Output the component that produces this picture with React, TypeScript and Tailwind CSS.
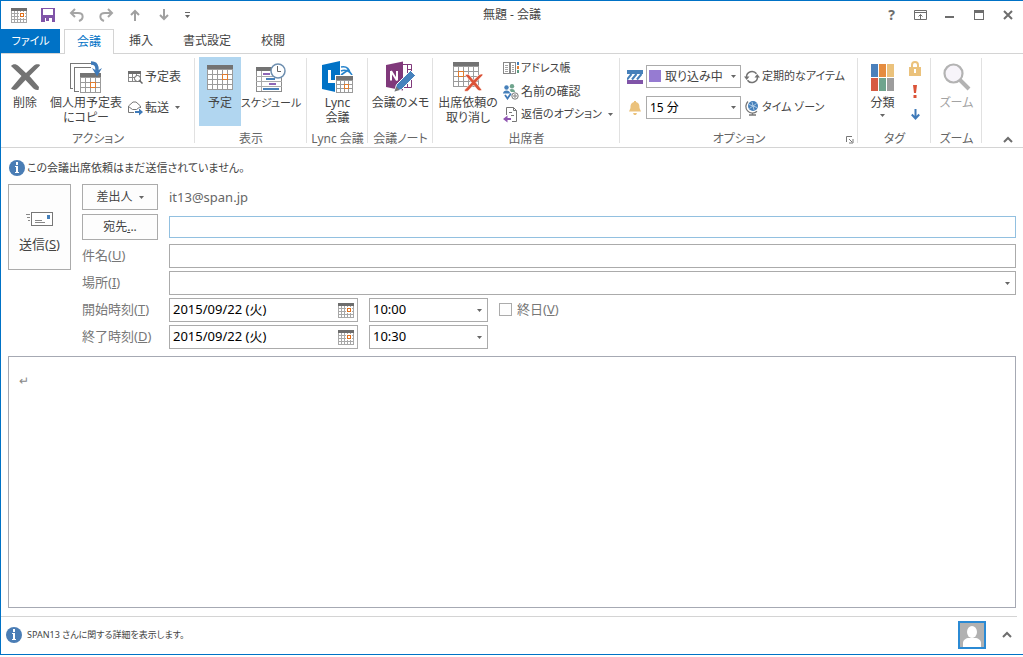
import type { ReactNode } from "react";

function CalendarIcon() {
    return (
        <svg width="16" height="15" viewBox="0 0 16 15" shapeRendering="crispEdges">
            <path d="M0 0h16v15H0z" fill="#fff" />
            <path d="M.5 0v15M3.500 3v12M6.500 3v12M9.500 3v12M12.500 3v12M15.500 0v15M0 5.500h16M0 8.500h16M0 11.500h16M0 14.500h16" stroke="#a8a8a8" />
            <path d="M0 0h16v3H0z" fill="#6d6d6d" />
            <path d="M8 4h6v6H8z" fill="#fff" />
            <path d="M9 5h4v4H9z" fill="#e0701c" />
            <path d="M10 6h2v2h-2z" fill="#fff" />
        </svg>
    );
}

// Large month grid used by the 32px ribbon icons
function MonthGrid({ x = 0, y = 0, cols = 5, rows = 4, cell = 5, mark = "3,1" }: { x?: number; y?: number; cols?: number; rows?: number; cell?: number; mark?: string }) {
    const w = cols * cell + 1;
    const h = rows * cell + 1;
    const [mc, mr] = mark.split(",").map(Number);
    const mx = x + mc * cell;
    const my = y + 4 + mr * cell;
    return (
        <g shapeRendering="crispEdges">
            <rect x={x} y={y} width={w} height={h + 4} fill="#fff" />
            {Array.from({ length: cols + 1 }, (_, i) => (
                <rect key={"c" + i} x={x + i * cell} y={y + 4} width="1" height={h} fill="#9b9b9b" />
            ))}
            {Array.from({ length: rows + 1 }, (_, i) => (
                <rect key={"r" + i} x={x} y={y + 4 + i * cell} width={w} height="1" fill="#9b9b9b" />
            ))}
            <rect x={x} y={y} width={w} height="4" fill="#737373" />
            <rect x={mx} y={my} width={cell + 1} height={cell + 1} fill="#e07c2f" />
            <rect x={mx + 1} y={my + 1} width={cell - 1} height={cell - 1} fill="#fff" />
        </g>
    );
}

function Caret({ className = "" }: { className?: string }) {
    return (
        <svg width="5" height="3" viewBox="0 0 5 3" className={className}>
            <path d="M0 0h5L2.500 3z" fill="#666" />
        </svg>
    );
}

function Chevron() {
    return (
        <svg width="10" height="7" viewBox="0 0 10 7">
            <path d="M1 6l4-4 4 4" fill="none" stroke="#6d6d6d" strokeWidth="2" />
        </svg>
    );
}

function InfoIcon() {
    return (
        <svg width="16" height="16" viewBox="0 0 16 16" className="shrink-0">
            <circle cx="8" cy="8" r="8" fill="#4a7db5" />
            <path d="M7 2h2v3H7zM6 6h3v6h1v1H6v-1h1V7H6z" fill="#fff" shapeRendering="crispEdges" />
        </svg>
    );
}

function DeleteIcon() {
    return (
        <svg width="29" height="28" viewBox="0 0 29 28">
            <path d="M0 3C2 .5 5 .5 7.500 3L15 10l8-7.500c1.500-1.500 4-1.500 5.500-1l.5 1L18.500 13 28 24l-.5 3c-3 .5-4.500-1-6-2.500L14.500 17l-7.500 8c-2 2.500-5 2.500-7 .5L10.500 13z" fill="#737373" />
        </svg>
    );
}

function CopyCalendarIcon() {
    return (
        <svg width="32" height="33" viewBox="0 0 32 33">
            <g shapeRendering="crispEdges" fill="none" stroke="#777">
                <path d="M.5 28V2.500H21M0 27.500h3" />
                <path d="M4.500 31V6.500H21M4 30.500h5" />
            </g>
            <MonthGrid x={10} y={12} cols={4} rows={3} mark="2,1" />
            <path d="M21 2c5 0 6.500 3 6 8" fill="none" stroke="#3f7ab8" strokeWidth="3.500" />
            <path d="M22 7l5 3 5-3-5 8.500z" fill="#3f7ab8" />
        </svg>
    );
}

function ScheduleIcon() {
    return (
        <svg width="30" height="29" viewBox="0 0 30 29">
            <g shapeRendering="crispEdges">
                <path d="M.5 4.500h25v24H.5z" fill="#fff" stroke="#8b8b8b" />
                <path d="M0 4h18v4H0z" fill="#737373" />
                <path d="M0 13.500h26M0 18.500h26M0 23.500h26M5.500 8v20" stroke="#aaa" />
                <path d="M7 10h7v2H7zM13 20h7v2h-7z" fill="#8f67b7" />
                <path d="M10 15h9v2h-9zM7 25h16v2H7z" fill="#4680ba" />
            </g>
            <circle cx="22" cy="8" r="7" fill="#fff" stroke="#6e8fb0" strokeWidth="1.500" />
            <path d="M21.500 3v5.500H25" fill="none" stroke="#666" />
        </svg>
    );
}

function LyncIcon() {
    return (
        <svg width="32" height="33" viewBox="0 0 32 33">
            <path d="M0 4l18-4v32L0 28z" fill="#0072c6" />
            <path d="M6 9h3v10h5v3H6z" fill="#fff" />
            <path d="M19 6c5-1 8 1 9 6M19 10c4-2 9 0 11 4M19 14l7-5" fill="none" stroke="#2583cc" strokeWidth="1.600" />
            <path d="M13 14h19v19H13z" fill="#fff" />
            <MonthGrid x={14} y={15} cols={4} rows={3} cell={4} mark="2,1" />
        </svg>
    );
}

function OneNoteIcon() {
    return (
        <svg width="29" height="32" viewBox="0 0 29 32">
            <path d="M17 3.500h8.500v23H17" fill="#fff" stroke="#80397b" />
            <path d="M21.500 4v22M21 8.500h5M21 13.500h5M21 18.500h5" stroke="#80397b" />
            <path d="M0 4l17-3.500v29L0 26z" fill="#80397b" />
            <path d="M5 19.500V10M5 10l6 9.500M11 19.500V10" fill="none" stroke="#fff" strokeWidth="2" />
            <path d="M8.500 30.500l2-7L24.500 9.500l5 5-14 14z" fill="#4682bd" stroke="#fff" />
            <path d="M8.500 30.500l1.700-5 3.500 3.500z" fill="#777" />
        </svg>
    );
}

function CancelIcon() {
    return (
        <svg width="30" height="30" viewBox="0 0 30 30">
            <MonthGrid x={0} y={0} cols={5} rows={4} mark="1,1" />
            <path d="M12 13c3-1.500 4-.5 6 2l2.500 3 5.500-5c1-1 2.500-1 3.500-1l.5 1-7 7.500 6 7.500c-2.500 1.500-4 .5-5.500-1.500L20.500 23l-5 5.500c-1 1-3 1-4 .5v-1l7-7.500z" fill="#db5338" stroke="#fff" strokeWidth=".6" />
        </svg>
    );
}

function CategoryIcon() {
    return (
        <svg width="23" height="27" viewBox="0 0 23 27" shapeRendering="crispEdges">
            <path d="M0 0h7v13H0z" fill="#4a80bb" />
            <path d="M8 0h7v13H8z" fill="#e58c3f" />
            <path d="M16 0h7v13h-7z" fill="#ebc27c" />
            <path d="M0 14h7v13H0z" fill="#d65c42" />
            <path d="M8 14h7v13H8z" fill="#6fa48d" />
            <path d="M16 14h7v13h-7z" fill="#9d9d9d" />
        </svg>
    );
}

function ZoomIcon() {
    return (
        <svg width="28" height="28" viewBox="0 0 28 28">
            <path d="M17 17l9 9" stroke="#b3b3b3" strokeWidth="4" />
            <circle cx="10.500" cy="10.500" r="9" fill="#f7f4fa" stroke="#b3b3b3" strokeWidth="2.200" />
        </svg>
    );
}

const smallIcons: Record<string, ReactNode> = {
    find: (
        <svg width="16" height="16" viewBox="0 0 16 16">
            <path d="M1.500 2.500h12v10h-12zM5.500 4v8M9.500 4v8M1 8.500h12" fill="none" stroke="#888" shapeRendering="crispEdges" />
            <path d="M1 2h13v3H1z" fill="#6d6d6d" />
            <circle cx="10.500" cy="9.500" r="3" fill="#fff" stroke="#666" />
            <path d="M12.500 11.500l3 3" stroke="#666" strokeWidth="1.500" />
        </svg>
    ),
    forward: (
        <svg width="16" height="16" viewBox="0 0 16 16">
            <path d="M7 12.500H1.500V6l4.500-4h3l4.500 4v2M1.500 6.500l4 3h4l4-3" fill="none" stroke="#777" />
            <path d="M8 11h4V8.500l4 3.500-4 3.500V13H8z" fill="#3f7ab8" />
        </svg>
    ),
    book: (
        <svg width="16" height="16" viewBox="0 0 16 16" shapeRendering="crispEdges">
            <path d="M.5 1.500h6v11h-6zM7.500 1.500h5v11h-5z" fill="#fff" stroke="#888" />
            <path d="M2 4.500h3M2 6.500h3M2 8.500h3M2 10.500h3M9 4.500h2M9 6.500h2M9 8.500h2M9 10.500h2" stroke="#a5a5a5" />
            <path d="M14 1h2v3h-2z" fill="#4680ba" />
            <path d="M14 5h2v3h-2z" fill="#e07c2f" />
            <path d="M14 9h2v3h-2z" fill="#5f9e84" />
        </svg>
    ),
    names: (
        <svg width="16" height="16" viewBox="0 0 16 16">
            <circle cx="3.500" cy="3.500" r="2.200" fill="#4680ba" />
            <path d="M0 9.500c0-4 7-4 7 0z" fill="#4680ba" />
            <circle cx="9" cy="2.200" r="2.200" fill="#6fa48d" />
            <path d="M6.500 5.500c3-1.500 5.500 0 5.500 2.500H8z" fill="#6fa48d" />
            <path d="M2 11l2.500 3.500L8 9.500" fill="none" stroke="#3f7ab8" strokeWidth="1.800" />
            <circle cx="12" cy="12" r="3.200" fill="#fff" stroke="#777" />
            <circle cx="12" cy="12" r="1.200" fill="none" stroke="#777" />
        </svg>
    ),
    reply: (
        <svg width="16" height="16" viewBox="0 0 16 16">
            <path d="M3.500 8V.5h7l3 3v11H9M10.500.5v3h3M6 5.500h3M8 8.500h3" fill="none" stroke="#777" />
            <path d="M8 11H4.500V8.500L0 12l4.500 3.500V13H8z" fill="#8f55b0" />
        </svg>
    ),
    status: (
        <svg width="16" height="16" viewBox="0 0 16 16">
            <path d="M0 1h16v4H0z" fill="#4680ba" />
            <path d="M0 11h16v4H0z" fill="#8054a8" />
            <path d="M0 10.500L4.500 5M5 10.500L9.500 5M10 10.500L14.500 5" stroke="#4680ba" strokeWidth="2" />
        </svg>
    ),
    bell: (
        <svg width="16" height="16" viewBox="0 0 16 16">
            <path d="M7 1h2v1c3.500 1 3.500 3.500 3.500 6l1.500 3.500H2L3.500 8c0-2.500 0-5 3.500-6zM6 13h4l-1 2H7z" fill="#ebc27c" />
        </svg>
    ),
    repeat: (
        <svg width="16" height="16" viewBox="0 0 16 16">
            <path d="M2.500 8a5.500 5.500 0 0 1 10-3.200M13.500 8a5.500 5.500 0 0 1-10 3.200" fill="none" stroke="#737373" strokeWidth="1.500" />
            <path d="M0 7.500h5.500L2.700 11zM10.500 8.500H16L13.200 5z" fill="#737373" />
        </svg>
    ),
    globe: (
        <svg width="16" height="16" viewBox="0 0 16 16">
            <circle cx="9" cy="6" r="5" fill="#4680ba" />
            <path d="M5 4.500l8 3M5.500 8.500l7-5M8 2l2 8" stroke="#b8d2ea" strokeWidth=".9" />
            <path d="M4 1.500a6.500 6.500 0 0 0 9 9.800M8.500 12.500v2M5 15h7" fill="none" stroke="#777" strokeWidth="1.300" />
        </svg>
    ),
    lock: (
        <svg width="12" height="15" viewBox="0 0 12 15">
            <path d="M3 7V4a3 3 0 0 1 6 0v3" fill="none" stroke="#ebc27c" strokeWidth="2" />
            <path d="M0 6h12v9H0z" fill="#ebc27c" />
            <path d="M5 8h2v4H5z" fill="#fff" />
        </svg>
    ),
    important: (
        <svg width="4" height="13" viewBox="0 0 4 13">
            <path d="M0 0h4l-1 8H1zM.5 10h3v3h-3z" fill="#db5338" />
        </svg>
    ),
    low: (
        <svg width="9" height="11" viewBox="0 0 9 11">
            <path d="M4.500 0v9M.8 5.500l3.700 4 3.700-4" fill="none" stroke="#3f7ab8" strokeWidth="2" />
        </svg>
    ),
};

function Group({ label, width, children, launcher = false }: { label: string; width: string; children: ReactNode; launcher?: boolean }) {
    return (
        <section className={`relative flex flex-col shrink-0 pt-[3px] ${width}`} aria-label={label}>
            <div className="flex h-[69px]">{children}</div>
            <div className="mt-[5px] flex items-center justify-center leading-[15px] text-[#666] whitespace-nowrap">{label}</div>
            {launcher && (
                <button aria-label="オプションの詳細" className="absolute right-1 bottom-[3px]">
                    <svg width="8" height="8" viewBox="0 0 8 8">
                        <path d="M.5 6V.5H6M3 3l3 3M7 3v4H3" fill="none" stroke="#777" />
                    </svg>
                </button>
            )}
            <span className="absolute right-0 top-1 bottom-1 w-px bg-[#e1e1e1]" />
        </section>
    );
}

function BigButton({ icon, lines, className = "", caret = false }: { icon: ReactNode; lines: string[]; className?: string; caret?: boolean }) {
    return (
        <button className={`flex flex-col items-center shrink-0 pt-[2px] leading-[15px] whitespace-nowrap ${className}`}>
            <span className="flex h-9 items-center justify-center">{icon}</span>
            {lines.map((line) => (
                <span key={line}>{line}</span>
            ))}
            {caret && <Caret className="mt-1" />}
        </button>
    );
}

function SmallButton({ icon, label, caret = false, className = "h-[23px]" }: { icon: string; label: string; caret?: boolean; className?: string }) {
    return (
        <button className={`flex items-center gap-[2px] whitespace-nowrap ${className}`}>
            {smallIcons[icon]}
            <span>{label}</span>
            {caret && <Caret className="ml-1" />}
        </button>
    );
}

function DateField({ id, value }: { id: string; value: string }) {
    return (
        <div className="flex h-6 w-[189px] items-center border border-[#ababab] bg-white pr-[3px]">
            <input id={id} type="text" defaultValue={value} className="h-5 min-w-0 flex-1 px-[3px] pb-[2px] text-[13px] leading-5 text-black outline-none" />
            <button type="button" aria-label="カレンダーを開く">
                <CalendarIcon />
            </button>
        </div>
    );
}

function TimeField({ label, value }: { label: string; value: string }) {
    return (
        <div className="relative h-6 w-[119px]">
            <select aria-label={label} defaultValue={value} className="h-full w-full appearance-none border border-[#ababab] bg-white px-[3px] pb-[2px] text-[13px] leading-5 text-black outline-none">
                <option>10:00</option>
                <option>10:30</option>
                <option>11:00</option>
            </select>
            <Caret className="pointer-events-none absolute right-[6px] top-[11px]" />
        </div>
    );
}

function FormLabel({ id, text, accessKey }: { id: string; text: string; accessKey: string }) {
    return (
        <label htmlFor={id} className="w-[87px] shrink-0 pb-[2px] text-[13px] leading-5 text-[#777]">
            {text}(<u>{accessKey}</u>)
        </label>
    );
}

const quickAccess = [
    { name: "会議", icon: <CalendarIcon /> },
    {
        name: "保存",
        icon: (
            <svg width="14" height="14" viewBox="0 0 14 14" shapeRendering="crispEdges">
                <path d="M0 0h14v14H0z" fill="#8054a8" />
                <path d="M2 1h10v6H2zM4 10h7v4H4z" fill="#fff" />
                <path d="M5 10h3v3H5z" fill="#8054a8" />
            </svg>
        ),
    },
    {
        name: "元に戻す",
        icon: (
            <svg width="16" height="14" viewBox="0 0 16 14">
                <path d="M2 5h7c6 0 6 6 1 8M6 1L2 5l4 4" fill="none" stroke="#a5a5a5" strokeWidth="2" />
            </svg>
        ),
    },
    {
        name: "やり直し",
        icon: (
            <svg width="16" height="14" viewBox="0 0 16 14">
                <path d="M14 5H7C1 5 1 11 6 13M10 1l4 4-4 4" fill="none" stroke="#a5a5a5" strokeWidth="2" />
            </svg>
        ),
    },
    {
        name: "前のアイテム",
        icon: (
            <svg width="10" height="12" viewBox="0 0 10 12">
                <path d="M5 12V2M1 6l4-4 4 4" fill="none" stroke="#a0a0a0" strokeWidth="2" />
            </svg>
        ),
    },
    {
        name: "次のアイテム",
        icon: (
            <svg width="10" height="12" viewBox="0 0 10 12">
                <path d="M5 0v10M1 6l4 4 4-4" fill="none" stroke="#a0a0a0" strokeWidth="2" />
            </svg>
        ),
    },
];

const windowButtons = [
    { name: "ヘルプ", icon: <span className="text-sm font-bold">?</span> },
    {
        name: "リボンの表示オプション",
        icon: (
            <svg width="13" height="10" viewBox="0 0 13 10" fill="none" stroke="#6d6d6d">
                <path d="M.5.500h12v9H.5zM.5 2.500h12M6.500 9V4.500M4.500 6.500l2-2 2 2" />
            </svg>
        ),
    },
    { name: "最小化", icon: <span className="mt-1 h-[2px] w-[9px] bg-[#6d6d6d]" /> },
    { name: "最大化", icon: <span className="h-[10px] w-[10px] border border-t-[3px] border-[#6d6d6d]" /> },
    {
        name: "閉じる",
        icon: (
            <svg width="10" height="10" viewBox="0 0 10 10">
                <path d="M1 1l8 8M9 1L1 9" stroke="#6d6d6d" strokeWidth="2" />
            </svg>
        ),
    },
];

export default function App() {
    return (
        <div className="min-h-screen flex flex-col overflow-x-hidden bg-white pb-[2px] font-['Noto_Sans','Noto_Sans_CJK_JP',sans-serif] text-xs text-[#444] [font-feature-settings:'palt']">
            <div className="flex flex-1 flex-col border-b border-l border-t border-[#0072c6]">

                <header className="grid h-7 grid-cols-[1fr_auto_1fr] items-center">
                    <div className="flex items-center pl-[3px]">
                        {quickAccess.map((item) => (
                            <button key={item.name} aria-label={item.name} className="flex h-7 w-[29px] items-center justify-center">
                                {item.icon}
                            </button>
                        ))}
                        <button aria-label="クイック アクセス ツール バーのカスタマイズ" className="flex h-7 w-[18px] items-center justify-center">
                            <svg width="5" height="6" viewBox="0 0 5 6">
                                <path d="M0 0h5v1H0zM0 3h5L2.500 6z" fill="#666" />
                            </svg>
                        </button>
                    </div>
                    <h1>無題 - 会議</h1>
                    <div className="flex items-center justify-end pr-px text-[#6d6d6d]">
                        {windowButtons.map((item) => (
                            <button key={item.name} aria-label={item.name} className="flex h-7 w-[29px] items-center justify-center">
                                {item.icon}
                            </button>
                        ))}
                    </div>
                </header>

                <nav className="flex h-[25px] border-b border-[#d4d4d4]">
                    <button className="w-[59px] bg-[#0072c6] text-[11px] text-white">ファイル</button>
                    <button className="-mb-px ml-1 border border-b-0 border-[#d4d4d4] bg-white px-3 text-[#0072c6]">会議</button>
                    <button className="px-[15px]">挿入</button>
                    <button className="px-[15px]">書式設定</button>
                    <button className="px-[15px]">校閲</button>
                </nav>

                <div className="flex h-[94px] border-b border-[#d4d4d4]">
                    <Group label="アクション" width="w-[194px]">
                        <BigButton icon={<DeleteIcon />} lines={["削除"]} className="w-12" />
                        <BigButton icon={<CopyCalendarIcon />} lines={["個人用予定表", "にコピー"]} className="w-[74px]" />
                        <div className="ml-1 flex flex-col pt-1">
                            <SmallButton icon="find" label="予定表" className="h-[31px]" />
                            <SmallButton icon="forward" label="転送" caret className="h-[31px]" />
                        </div>
                    </Group>

                    <Group label="表示" width="w-[112px]">
                        <BigButton
                            icon={<svg width="26" height="25" viewBox="0 0 26 25"><MonthGrid /></svg>}
                            lines={["予定"]}
                            className="ml-1 w-[42px] bg-[#b1d6f0]"
                        />
                        <BigButton icon={<ScheduleIcon />} lines={["スケジュール"]} className="w-[60px] text-[11px]" />
                    </Group>

                    <Group label="Lync 会議" width="w-[61px]">
                        <BigButton icon={<LyncIcon />} lines={["Lync", "会議"]} className="w-full" />
                    </Group>

                    <Group label="会議ノート" width="w-[65px]">
                        <BigButton icon={<OneNoteIcon />} lines={["会議のメモ"]} className="w-full" />
                    </Group>

                    <Group label="出席者" width="w-[187px]">
                        <BigButton icon={<CancelIcon />} lines={["出席依頼の", "取り消し"]} className="w-[70px]" />
                        <div className="flex flex-col">
                            <SmallButton icon="book" label="アドレス帳" className="h-[23px] text-[11px]" />
                            <SmallButton icon="names" label="名前の確認" />
                            <SmallButton icon="reply" label="返信のオプション" caret className="h-[23px] text-[11px]" />
                        </div>
                    </Group>

                    <Group label="オプション" width="w-[238px]" launcher>
                        <div className="flex flex-col pl-[7px] pt-1">
                            <div className="flex h-[31px] items-center gap-[3px]">
                                {smallIcons.status}
                                <div className="relative h-[23px] w-[95px]">
                                    <select aria-label="公開方法" className="h-full w-full appearance-none border border-[#ababab] bg-white pl-[18px] outline-none">
                                        <option>取り込み中</option>
                                        <option>空き時間</option>
                                    </select>
                                    <span className="pointer-events-none absolute left-[3px] top-[5px] h-3 w-3 bg-[#967bd2]" />
                                    <Caret className="pointer-events-none absolute right-[5px] top-[10px]" />
                                </div>
                            </div>
                            <div className="flex h-[31px] items-center gap-[3px]">
                                {smallIcons.bell}
                                <div className="relative h-[23px] w-[95px]">
                                    <select aria-label="アラーム" className="h-full w-full appearance-none border border-[#ababab] bg-white pl-[3px] text-black outline-none">
                                        <option>15 分</option>
                                        <option>30 分</option>
                                    </select>
                                    <Caret className="pointer-events-none absolute right-[5px] top-[10px]" />
                                </div>
                            </div>
                        </div>
                        <div className="ml-[3px] flex flex-col pt-1">
                            <SmallButton icon="repeat" label="定期的なアイテム" className="h-[31px] text-[11px]" />
                            <SmallButton icon="globe" label="タイム ゾーン" className="h-[31px] text-[11px]" />
                        </div>
                    </Group>

                    <Group label="タグ" width="w-[73px]">
                        <BigButton icon={<CategoryIcon />} lines={["分類"]} caret className="w-[49px]" />
                        <div className="flex flex-col">
                            <button aria-label="非公開" className="flex h-[23px] w-4 items-center justify-center">{smallIcons.lock}</button>
                            <button aria-label="重要度 - 高" className="flex h-[23px] w-4 items-center justify-center">{smallIcons.important}</button>
                            <button aria-label="重要度 - 低" className="flex h-[23px] w-4 items-center justify-center">{smallIcons.low}</button>
                        </div>
                    </Group>

                    <Group label="ズーム" width="w-[51px]">
                        <BigButton icon={<ZoomIcon />} lines={["ズーム"]} className="w-full text-[#a3a3a3]" />
                    </Group>

                    <button aria-label="リボンを折りたたむ" className="mb-1 ml-auto mr-[10px] self-end">
                        <Chevron />
                    </button>
                </div>

                <main className="flex flex-1 flex-col px-[7px] pt-[10px]">
                    <p className="flex h-5 items-center gap-[2px] pl-[1px] text-[11px]">
                        <InfoIcon />
                        この会議出席依頼はまだ送信されていません。
                    </p>

                    <form className="mt-[6px] flex items-start gap-[11px]" onSubmit={(e) => e.preventDefault()}>
                        <button className="flex h-[86px] w-[63px] shrink-0 flex-col items-center justify-end gap-2 border border-[#ababab] bg-[#fdfdfd] pb-[15px]">
                            <svg width="27" height="14" viewBox="0 0 27 14" shapeRendering="crispEdges">
                                <path d="M5.500.500h21v13h-21z" fill="#fff" stroke="#777" />
                                <path d="M0 2.500h4M1 5.500h3M2 8.500h2M9 8.500h7M9 10.500h10" stroke="#888" />
                                <path d="M21 3h3v4h-3z" fill="#4680ba" />
                            </svg>
                            <span className="text-[13px] leading-5">送信(<u>S</u>)</span>
                        </button>

                        <div className="min-w-0 flex-1">
                            <div className="flex flex-col gap-1">
                                <div className="flex items-center gap-[11px]">
                                    <button type="button" className="flex h-[26px] w-[76px] items-center justify-center gap-[6px] border border-[#ababab] bg-[#fdfdfd]">
                                        差出人 <Caret />
                                    </button>
                                    <span className="text-[13px] leading-5 text-[#666]">it13@span.jp</span>
                                </div>
                                <div className="flex items-center gap-[11px]">
                                    <button type="button" className="h-[26px] w-[76px] shrink-0 border border-[#ababab] bg-[#fdfdfd]">
                                        宛先<u>.</u>..
                                    </button>
                                    <input type="text" aria-label="宛先" className="h-[22px] min-w-0 flex-1 border border-[#92c0e0] px-[3px] outline-none" />
                                </div>
                            </div>

                            <div className="mt-1 flex flex-col gap-[3px]">
                                <div className="flex items-center">
                                    <FormLabel id="subject" text="件名" accessKey="U" />
                                    <input id="subject" type="text" className="h-6 min-w-0 flex-1 border border-[#ababab] px-[3px] outline-none" />
                                </div>
                                <div className="flex items-center">
                                    <FormLabel id="place" text="場所" accessKey="I" />
                                    <div className="relative h-6 flex-1">
                                        <select id="place" className="h-full w-full appearance-none border border-[#ababab] bg-white px-[3px] outline-none">
                                            <option></option>
                                        </select>
                                        <Caret className="pointer-events-none absolute right-[6px] top-[11px]" />
                                    </div>
                                </div>
                                <div className="flex items-center">
                                    <FormLabel id="start" text="開始時刻" accessKey="T" />
                                    <DateField id="start" value="2015/09/22 (火)" />
                                    <div className="ml-[11px]"><TimeField label="開始時刻" value="10:00" /></div>
                                    <label className="ml-[11px] flex items-center gap-[5px] pb-[2px] text-[13px] leading-5 text-[#777]">
                                        <input type="checkbox" className="h-[13px] w-[13px] appearance-none border border-[#ababab] bg-[#fdfdfd]" />
                                        <span>終日(<u>V</u>)</span>
                                    </label>
                                </div>
                                <div className="flex items-center">
                                    <FormLabel id="end" text="終了時刻" accessKey="D" />
                                    <DateField id="end" value="2015/09/22 (火)" />
                                    <div className="ml-[11px]"><TimeField label="終了時刻" value="10:30" /></div>
                                </div>
                            </div>
                        </div>
                    </form>

                    <textarea
                        aria-label="本文"
                        defaultValue="↵"
                        className="mt-[7px] w-full flex-1 resize-none border border-[#a6a9b3] px-[10px] py-4 text-[#888] outline-none"
                    />
                </main>

                <footer className="mr-[6px] mt-2 flex h-[38px] items-center border-t border-[#d4d4d4] pb-[2px] pl-[5px]">
                    <InfoIcon />
                    <span className="ml-[5px] text-[9px]">SPAN13 さんに関する詳細を表示します。</span>
                    <button aria-label="連絡先" className="ml-auto border-2 border-[#2b8ad4]">
                        <svg width="24" height="24" viewBox="0 0 24 24">
                            <path d="M0 0h24v24H0z" fill="#b1b1b1" />
                            <ellipse cx="12" cy="9" rx="5" ry="6" fill="#fff" />
                            <path d="M3 24v-4c0-3 3-5 6-5h6c3 0 6 2 6 5v4z" fill="#fff" />
                        </svg>
                    </button>
                    <button aria-label="展開" className="ml-4 mr-[5px]">
                        <Chevron />
                    </button>
                </footer>
            </div>
        </div>
    );
}
